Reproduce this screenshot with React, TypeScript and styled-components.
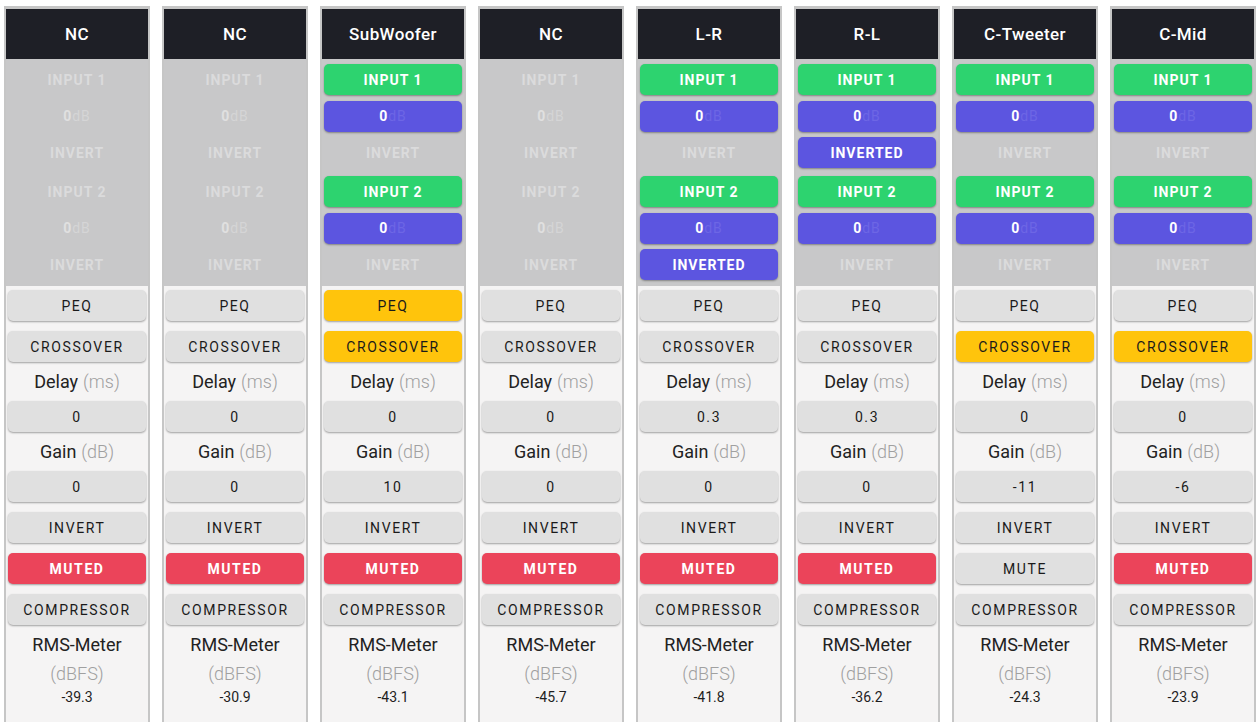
import React from 'react';
import styled, { createGlobalStyle, css } from 'styled-components';

type Tone = 'plain' | 'green' | 'blue' | 'yellow' | 'red';

interface InputState {
  on: boolean;
  inverted: boolean;
}

interface ChannelData {
  name: string;
  inputs: InputState[] | null;
  peq: boolean;
  crossover: boolean;
  delay: string;
  gain: string;
  muted: boolean;
  rms: string;
}

const off: InputState = { on: true, inverted: false };
const inv: InputState = { on: true, inverted: true };

const channels: ChannelData[] = [
  { name: 'NC', inputs: null, peq: false, crossover: false, delay: '0', gain: '0', muted: true, rms: '-39.3' },
  { name: 'NC', inputs: null, peq: false, crossover: false, delay: '0', gain: '0', muted: true, rms: '-30.9' },
  { name: 'SubWoofer', inputs: [off, off], peq: true, crossover: true, delay: '0', gain: '10', muted: true, rms: '-43.1' },
  { name: 'NC', inputs: null, peq: false, crossover: false, delay: '0', gain: '0', muted: true, rms: '-45.7' },
  { name: 'L-R', inputs: [off, inv], peq: false, crossover: false, delay: '0.3', gain: '0', muted: true, rms: '-41.8' },
  { name: 'R-L', inputs: [inv, off], peq: false, crossover: false, delay: '0.3', gain: '0', muted: true, rms: '-36.2' },
  { name: 'C-Tweeter', inputs: [off, off], peq: false, crossover: true, delay: '0', gain: '-11', muted: false, rms: '-24.3' },
  { name: 'C-Mid', inputs: [off, off], peq: false, crossover: true, delay: '0', gain: '-6', muted: true, rms: '-23.9' },
];

const GlobalStyle = createGlobalStyle`
  html, body {
    margin: 0;
    padding: 0;
    background: #ffffff;
    font-family: Roboto, "Noto Sans", "Liberation Sans", sans-serif;
    overflow: hidden;
  }
`;

const tones: Record<Tone, ReturnType<typeof css>> = {
  plain: css`
    background: #e0e0e0;
    color: #1a1a1a;
    font-weight: 400;
  `,
  green: css`
    background: #2dd36f;
    color: #ffffff;
    font-weight: 700;
  `,
  blue: css`
    background: #5c55e0;
    color: #ffffff;
    font-weight: 700;
  `,
  yellow: css`
    background: #ffc40c;
    color: #1a1a1a;
    font-weight: 400;
  `,
  red: css`
    background: #eb445a;
    color: #ffffff;
    font-weight: 700;
  `,
};

const Page = styled.main`
  display: grid;
  grid-template-columns: repeat(8, 1fr);
  gap: 12px;
  height: 100vh;
  padding: 6px 3px 0 4px;
  box-sizing: border-box;
`;

const Channel = styled.section`
  display: flex;
  flex-direction: column;
  border: 2px solid #c6c6c6;
  border-top-width: 3px;
  border-bottom: none;
  background: #f5f4f4;
  min-width: 0;
`;

const Header = styled.header`
  height: 50px;
  display: flex;
  align-items: center;
  justify-content: center;
  background: #1e1f26;
  color: #ffffff;
  font-size: 17px;
  font-weight: 500;
  letter-spacing: 0.4px;
`;

const InputSection = styled.div`
  display: flex;
  flex-direction: column;
  gap: 8px;
  padding: 5px 2px 6px;
  background: #c8c8c9;
`;

const InputGroup = styled.div`
  display: flex;
  flex-direction: column;
  gap: 5.5px;
`;

const Button = styled.div<{ $tone: Tone }>`
  height: 31px;
  display: flex;
  align-items: center;
  justify-content: center;
  border-radius: 5px;
  font-size: 14px;
  letter-spacing: 1.6px;
  box-shadow: 0 1px 2px rgba(0, 0, 0, 0.35);
  ${({ $tone }) => tones[$tone]}
`;

const Chip = styled(Button)`
  letter-spacing: 1px;
`;

const Ghost = styled.div`
  height: 31px;
  display: flex;
  align-items: center;
  justify-content: center;
  color: #dbdbdc;
  font-size: 14px;
  font-weight: 700;
  letter-spacing: 1px;
`;

const Level = styled.span<{ $active: boolean }>`
  font-weight: 700;
  color: ${({ $active }) => ($active ? '#ffffff' : '#e0e0e0')};
`;

const LevelUnit = styled.span<{ $active: boolean }>`
  font-weight: 400;
  letter-spacing: 1px;
  color: ${({ $active }) => ($active ? '#6d66e5' : '#d5d5d6')};
`;

const Controls = styled.div`
  display: flex;
  flex-direction: column;
  gap: 10px;
  padding: 4px 2px 0;
`;

const Label = styled.div`
  height: 19px;
  display: flex;
  align-items: center;
  justify-content: center;
  gap: 5px;
  font-size: 18px;
  color: #222222;
`;

const Unit = styled.span`
  color: #a0a0a0;
  font-weight: 300;
`;

const Meter = styled.div`
  display: flex;
  flex-direction: column;
  align-items: center;
  margin-top: -5px;
  font-size: 18px;
  line-height: 29px;
  color: #222222;
`;

const MeterValue = styled.div`
  font-size: 14px;
  line-height: 18px;
  color: #1e1e1e;
`;

const InputRows = ({ input, index }: { input: InputState | null; index: number }) => {
  if (!input) {
    return (
      <InputGroup>
        <Ghost>INPUT {index}</Ghost>
        <Ghost>
          <Level $active={false}>0</Level>
          <LevelUnit $active={false}>dB</LevelUnit>
        </Ghost>
        <Ghost>INVERT</Ghost>
      </InputGroup>
    );
  }
  return (
    <InputGroup>
      <Chip $tone="green">INPUT {index}</Chip>
      <Chip $tone="blue">
        <Level $active>0</Level>
        <LevelUnit $active>dB</LevelUnit>
      </Chip>
      {input.inverted ? <Chip $tone="blue">INVERTED</Chip> : <Ghost>INVERT</Ghost>}
    </InputGroup>
  );
};

const ChannelStrip = ({ data }: { data: ChannelData }) => (
  <Channel>
    <Header>{data.name}</Header>
    <InputSection>
      <InputRows input={data.inputs ? data.inputs[0] : null} index={1} />
      <InputRows input={data.inputs ? data.inputs[1] : null} index={2} />
    </InputSection>
    <Controls>
      <Button $tone={data.peq ? 'yellow' : 'plain'}>PEQ</Button>
      <Button $tone={data.crossover ? 'yellow' : 'plain'}>CROSSOVER</Button>
      <Label>
        Delay <Unit>(ms)</Unit>
      </Label>
      <Button $tone="plain">{data.delay}</Button>
      <Label>
        Gain <Unit>(dB)</Unit>
      </Label>
      <Button $tone="plain">{data.gain}</Button>
      <Button $tone="plain">INVERT</Button>
      <Button $tone={data.muted ? 'red' : 'plain'}>{data.muted ? 'MUTED' : 'MUTE'}</Button>
      <Button $tone="plain">COMPRESSOR</Button>
      <Meter>
        <div>RMS-Meter</div>
        <Unit>(dBFS)</Unit>
        <MeterValue>{data.rms}</MeterValue>
      </Meter>
    </Controls>
  </Channel>
);

const App = () => (
  <>
    <GlobalStyle />
    <Page>
      {channels.map((c, i) => (
        <ChannelStrip key={i} data={c} />
      ))}
    </Page>
  </>
);

export default App;
